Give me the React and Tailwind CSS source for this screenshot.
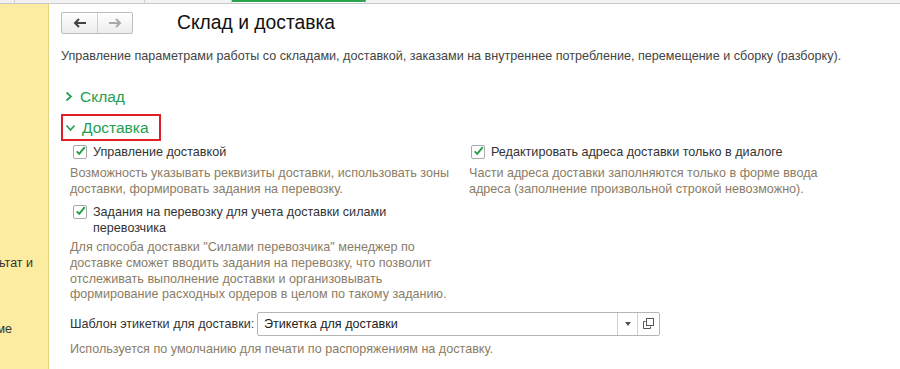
import React from "react";

const hint = "text-[#8a7c66]";

function Check() {
  return (
    <span className="w-[14px] h-[14px] shrink-0 border border-[#a9a9a9] bg-white rounded-[2px] flex items-center justify-center">
      <svg width="13" height="12" viewBox="0 0 13 12" className="-mt-[3px] ml-[1px]">
        <path d="M2 6.5 L5 9.5 L11.5 1.5" fill="none" stroke="#1f9d45" strokeWidth="2.2" />
      </svg>
    </span>
  );
}

export default function App() {
  return (
    <div className="w-[900px] h-[369px] bg-white overflow-hidden flex flex-col text-[12.6px] text-[#333]" style={{ fontFamily: '"Liberation Sans", Arial, sans-serif' }}>
      {/* tab strip */}
      <div className="h-[4px] shrink-0 flex bg-[#f2f2f2] border-b border-[#c8c8c8]">
        <div className="w-[15px] border-r border-[#cfcfcf]" />
        <div className="w-[130px] border-r border-[#cfcfcf]" />
        <div className="w-[87px] border-r border-[#cfcfcf]" />
        <div className="w-[134px] border-r border-[#cfcfcf] border-t-2 border-t-[#2aa44f] bg-white" />
        <div className="flex-1" />
      </div>

      <div className="flex flex-1 min-h-0">
        {/* left panel */}
        <div className="w-[49px] shrink-0 bg-[#fbeca2] border-r border-[#e3d27f] overflow-hidden flex flex-col text-[#333] text-[12.5px]">
          <div className="h-[250px]" />
          <div className="flex justify-end whitespace-nowrap pr-[15px]">результат и</div>
          <div className="h-[47px]" />
          <div className="flex justify-end whitespace-nowrap pr-[36px]">в форме</div>
        </div>

        {/* content */}
        <div className="flex-1 pl-[12px] pt-[8px]">
          <div className="flex items-center h-[22px]">
            <div className="flex w-[72px] h-[22px] border border-[#bdbdbd] rounded-[2px] bg-gradient-to-b from-white to-[#ececec]">
              <div className="w-[36px] flex items-center justify-center border-r border-[#cfcfcf]">
                <svg width="14" height="10" viewBox="0 0 14 10">
                  <path d="M13 5H3M6 1L2 5L6 9" fill="none" stroke="#444" strokeWidth="2" />
                </svg>
              </div>
              <div className="flex-1 flex items-center justify-center">
                <svg width="14" height="10" viewBox="0 0 14 10">
                  <path d="M1 5H11M8 1L12 5L8 9" fill="none" stroke="#a8a8a8" strokeWidth="2" />
                </svg>
              </div>
            </div>
            <div className="ml-[44px] text-[19.3px] text-[#111]">Склад и доставка</div>
          </div>

          <div className="mt-[13px] text-[#444]">
            Управление параметрами работы со складами, доставкой, заказами на внутреннее потребление, перемещение и сборку (разборку).
          </div>

          <div className="mt-[19px] flex items-center gap-[7px] text-[#22a04f] text-[15.5px] pl-[4px]">
            <svg width="8" height="11" viewBox="0 0 8 11">
              <path d="M1.5 1.5L6 5.5L1.5 9.5" fill="none" stroke="#22a04f" strokeWidth="1.7" />
            </svg>
            <span>Склад</span>
          </div>

          <div className="mt-[6px] w-[100px] h-[27px] border-2 border-[#e01f26] flex items-center gap-[6px] text-[#22a04f] text-[15.5px] pl-[2px]">
            <svg width="11" height="8" viewBox="0 0 11 8">
              <path d="M1.5 1.5L5.5 6L9.5 1.5" fill="none" stroke="#22a04f" strokeWidth="1.7" />
            </svg>
            <span>Доставка</span>
          </div>

          <div className="flex mt-[4px]">
            <div className="w-[399px] pl-[12px]">
              <div className="flex items-center gap-[6px] h-[14px]">
                <Check />
                <span>Управление доставкой</span>
              </div>
              <div className={`mt-[6px] -ml-[3px] leading-[16px] ${hint}`}>
                <div>Возможность указывать реквизиты доставки, использовать зоны</div>
                <div>доставки, формировать задания на перевозку.</div>
              </div>
              <div className="flex gap-[6px] mt-[8px]">
                <Check />
                <div className="leading-[16px] -mt-[1px]">
                  <div>Задания на перевозку для учета доставки силами</div>
                  <div>перевозчика</div>
                </div>
              </div>
              <div className={`mt-[4px] -ml-[3px] leading-[15.7px] whitespace-nowrap ${hint}`}>
                <div>Для способа доставки "Силами перевозчика" менеджер по</div>
                <div>доставке сможет вводить задания на перевозку, что позволит</div>
                <div>отслеживать выполнение доставки и организовывать</div>
                <div>формирование расходных ордеров в целом по такому заданию.</div>
              </div>
            </div>
            <div className="w-[360px] pl-[11px]">
              <div className="flex items-center gap-[6px] h-[14px]">
                <Check />
                <span>Редактировать адреса доставки только в диалоге</span>
              </div>
              <div className={`mt-[6px] -ml-[2px] leading-[16px] whitespace-nowrap ${hint}`}>
                <div>Части адреса доставки заполняются только в форме ввода</div>
                <div>адреса (заполнение произвольной строкой невозможно).</div>
              </div>
            </div>
          </div>

          <div className="flex items-center mt-[9px] pl-[9px]">
            <span className="w-[187px]">Шаблон этикетки для доставки:</span>
            <div className="w-[403px] h-[24px] border border-[#b5b5b5] rounded-[2px] flex items-stretch bg-white">
              <div className="flex-1 flex items-center pl-[6px] text-[#222]">Этикетка для доставки</div>
              <div className="w-[20px] border-l border-[#d0d0d0] flex items-center justify-center">
                <svg width="6" height="4" viewBox="0 0 6 4"><path d="M0 0H6L3 4Z" fill="#555" /></svg>
              </div>
              <div className="w-[22px] border-l border-[#d0d0d0] flex items-center justify-center">
                <svg width="11" height="11" viewBox="0 0 11 11">
                  <rect x="3.5" y="0.5" width="7" height="7" fill="none" stroke="#555" />
                  <path d="M2.5 3.5H0.5V10.5H7.5V8.5" fill="none" stroke="#555" />
                </svg>
              </div>
            </div>
          </div>

          <div className={`mt-[4px] pl-[9px] ${hint}`}>
            Используется по умолчанию для печати по распоряжениям на доставку.
          </div>
        </div>
      </div>
    </div>
  );
}
